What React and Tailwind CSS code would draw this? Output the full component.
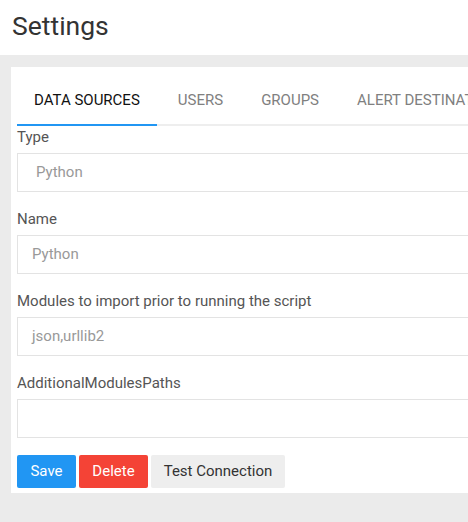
import React from "react";

const tabs = ["DATA SOURCES", "USERS", "GROUPS", "ALERT DESTINATIONS"];

const fields = [
  { label: "Type", value: "Python", select: true },
  { label: "Name", value: "Python" },
  { label: "Modules to import prior to running the script", value: "json,urllib2" },
  { label: "AdditionalModulesPaths", value: "" },
];

export default function App() {
  return (
    <div
      className="w-[468px] h-[522px] overflow-hidden bg-[#ebebeb]"
      style={{ fontFamily: "Roboto, 'Liberation Sans', sans-serif" }}
    >
      {/* Header */}
      <div className="h-[55px] bg-white flex items-center px-[12px]">
        <h1 className="text-[26.5px] text-[#333] leading-none pb-[2px]">Settings</h1>
      </div>

      {/* Card */}
      <div className="ml-[11px] mt-[12px] w-[560px] bg-white pt-[10px] pb-[5px] pl-[6px]">
        {/* Tabs */}
        <div className="flex gap-[4px] border-b-2 border-[#eeeeee] whitespace-nowrap">
          {tabs.map((t, i) => (
            <div
              key={t}
              className={`h-[47px] px-[17px] flex items-center text-[15px] -mb-[2px] ${
                i === 0
                  ? "text-[#111] border-b-2 border-[#2196f3] h-[49px]"
                  : "text-[#808080]"
              }`}
            >
              {t}
            </div>
          ))}
        </div>

        {/* Form */}
        <div className="pt-[1px]">
          {fields.map((f) => (
            <div key={f.label} className="mb-[17px]">
              <div className="h-[20px] leading-[20px] text-[15px] text-[#555] mb-[6px]">
                {f.label}
              </div>
              <div
                className={`h-[39px] border border-[#e3e3e3] flex items-center text-[15px] text-[#999] ${
                  f.select ? "pl-[18px]" : "pl-[14px]"
                }`}
              >
                {f.value}
              </div>
            </div>
          ))}

          {/* Buttons */}
          <div className="flex gap-[3px]">
            <button className="h-[33px] w-[59px] rounded-[2px] bg-[#2196f3] text-white text-[15px]">
              Save
            </button>
            <button className="h-[33px] w-[69px] rounded-[2px] bg-[#f44336] text-white text-[15px]">
              Delete
            </button>
            <button className="h-[33px] w-[134px] rounded-[2px] bg-[#eeeeee] text-[#333] text-[15px]">
              Test Connection
            </button>
          </div>
        </div>
      </div>
    </div>
  );
}
